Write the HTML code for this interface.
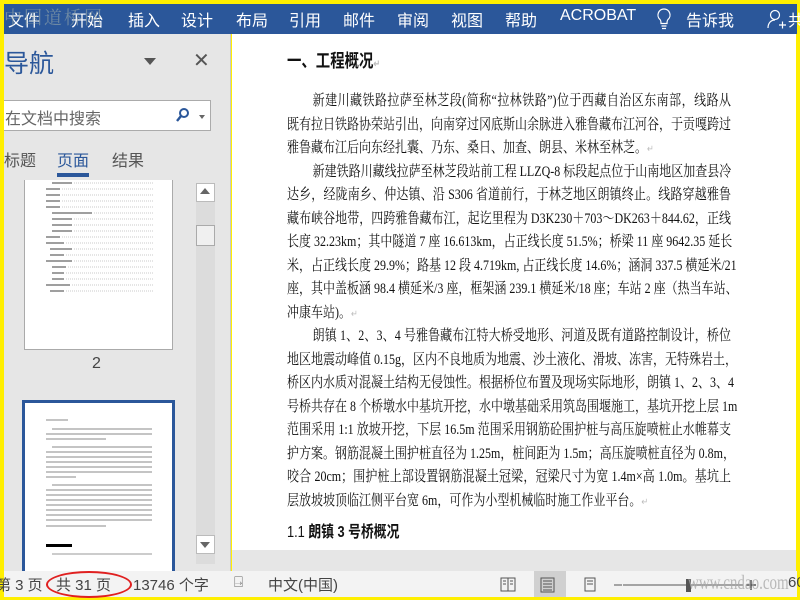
<!DOCTYPE html>
<html><head><meta charset="utf-8"><style>
*{margin:0;padding:0;box-sizing:border-box}
body{width:800px;height:600px;overflow:hidden;background:#ffef00;position:relative;font-family:"Liberation Sans","Noto Sans CJK SC",sans-serif}
.s{white-space:nowrap}
#rib{position:absolute;left:4px;top:4px;width:793px;height:30px;background:#2b579a;color:#fff;font-size:16px}
#rib span{position:absolute;top:3px}
#nav{position:absolute;left:4px;top:34px;width:227px;height:537px;background:#e6e6e6;border-right:1px solid #c8c8c8}
#doc{position:absolute;left:232px;top:34px;width:564px;height:516px;background:#fff}
#gray{position:absolute;left:232px;top:550px;width:564px;height:21px;background:#e6e6e6}
#stat{position:absolute;left:4px;top:571px;width:793px;height:26px;background:#f3f3f3;font-size:15px;color:#444}
#stat span{position:absolute;top:3px}
.l{position:absolute;left:287px;width:555px;transform:scaleX(.8);transform-origin:0 0;font-family:"Liberation Serif","Noto Serif CJK SC",serif;font-size:15px;line-height:18px;color:#111;text-align:justify;text-align-last:justify;white-space:nowrap}
.l.e{text-align-last:left}
.th{position:absolute;background:#fff;border:1px solid #aaa}
</style></head><body>
<div id="rib">
<span class="s" style="left:4px">文件</span><span class="s" style="left:67px">开始</span><span class="s" style="left:124px">插入</span><span class="s" style="left:177px">设计</span><span class="s" style="left:232px">布局</span><span class="s" style="left:285px">引用</span><span class="s" style="left:339px">邮件</span><span class="s" style="left:393px">审阅</span><span class="s" style="left:447px">视图</span><span class="s" style="left:501px">帮助</span><span class="s" style="left:556px">ACROBAT</span>
<svg style="position:absolute;left:652px;top:4px" width="16" height="22"><path d="M8 1a6 6 0 0 0-4 10.5c1 1 1 3 1 4h6c0-1 0-3 1-4A6 6 0 0 0 8 1zM5.5 18h5M6 20.5h4" stroke="#fff" fill="none" stroke-width="1.2"/></svg>
<span class="s" style="left:682px">告诉我</span>
<svg style="position:absolute;left:762px;top:4px" width="22" height="22"><circle cx="9" cy="7" r="4.5" stroke="#fff" fill="none" stroke-width="1.2"/><path d="M2 20c0-5 3-8 7-8M13 17h7M16.5 13.5v7" stroke="#fff" fill="none" stroke-width="1.2"/></svg>
<span class="s" style="left:784px">共</span>
</div>
<div class="s" style="position:absolute;left:4px;top:4px;font-size:18px;color:#9aa;opacity:.6;font-family:'Noto Serif CJK SC',serif;letter-spacing:2px">中国道桥网</div>
<div id="nav">
<div class="s" style="position:absolute;left:0;top:10px;font-size:25px;color:#2b579a">导航</div>
<div style="position:absolute;left:140px;top:24px;width:0;height:0;border:6px solid transparent;border-top:7px solid #555"></div>
<div style="position:absolute;left:189px;top:14px;font-size:20px;color:#555">✕</div>
<div style="position:absolute;left:0;top:66px;width:207px;height:31px;background:#fff;border:1px solid #ababab;border-left:none"></div>
<div class="s" style="position:absolute;left:1px;top:71px;font-size:16px;color:#666">在文档中搜索</div>
<svg style="position:absolute;left:172px;top:73px" width="14" height="16"><circle cx="8" cy="6" r="4" stroke="#2b579a" stroke-width="2" fill="none"/><path d="M5 9l-4 5" stroke="#2b579a" stroke-width="2.4"/></svg>
<div style="position:absolute;left:195px;top:81px;border:3px solid transparent;border-top:4px solid #666"></div>
<div class="s" style="position:absolute;left:0;top:113px;font-size:16px;color:#555">标题</div>
<div class="s" style="position:absolute;left:53px;top:113px;font-size:16px;color:#2b579a">页面</div>
<div class="s" style="position:absolute;left:108px;top:113px;font-size:16px;color:#555">结果</div>
<div style="position:absolute;left:53px;top:139px;width:32px;height:4px;background:#2b579a"></div>
<div class="th" style="left:20px;top:146px;width:149px;height:170px;border-top:none"></div>
<svg style="position:absolute;left:38px;top:142px" width="118" height="120">
<g stroke="#666" stroke-width="1.2">
<path d="M10 7h20M4 13h14M4 19h14M4 25h14M4 31h14M10 37h40M10 43h20M10 49h20M10 55h20M4 61h14M4 67h18M8 73h22M8 79h14M4 85h26M10 91h14M10 97h12M10 103h12M4 109h24M8 115h14"/>
</g>
<g stroke="#bbb" stroke-width=".8" stroke-dasharray="1 1"><path d="M32 7h80M20 13h92M20 19h92M20 25h92M20 31h92M52 37h60M32 43h80M32 49h80M32 55h80M20 61h92M24 67h88M32 73h80M24 79h88M32 85h80M26 91h86M24 97h88M24 103h88M30 109h82M24 115h88"/></g>
</svg>
<div style="position:absolute;left:88px;top:321px;font-size:16px;color:#444">2</div>
<div style="position:absolute;left:18px;top:366px;width:153px;height:180px;border:3px solid #2b579a;border-bottom:none;background:#fff"></div>
<svg style="position:absolute;left:38px;top:385px" width="118" height="160"><g stroke="#888" stroke-width="1.1"><path d="M4 1h22M10 10h100M4 15h106M4 20h60M10 28h100M4 33h106M4 38h106M4 43h106M4 48h106M4 53h106M4 58h30M10 66h100M4 71h106M4 76h106M4 81h106M4 86h106M4 91h106M4 96h106M4 101h106M4 107h60"/></g><rect x="4" y="125" width="26" height="3" fill="#000"/><path d="M10 135h100" stroke="#999"/></svg>
<div style="position:absolute;left:192px;top:150px;width:19px;height:380px;background:#dcdcdc"></div>
<div style="position:absolute;left:192px;top:149px;width:19px;height:19px;background:#fff;border:1px solid #bbb"></div>
<div style="position:absolute;left:196px;top:154px;border:5px solid transparent;border-bottom:6px solid #666;border-top:none"></div>
<div style="position:absolute;left:192px;top:191px;width:19px;height:21px;background:#f0f0f0;border:1px solid #aaa"></div>
<div style="position:absolute;left:192px;top:501px;width:19px;height:19px;background:#fff;border:1px solid #bbb"></div>
<div style="position:absolute;left:196px;top:508px;border:5px solid transparent;border-top:6px solid #666;border-bottom:none"></div>
</div>
<div id="doc"></div>
<div id="gray"></div>
<div class="l e" style="top:52px;font-family:'Liberation Sans','Noto Sans CJK SC',sans-serif;font-size:18px;font-weight:bold">一、工程概况<span style="color:#bbb;font-size:10px">↵</span></div>
<div class="l" style="top:92px;padding-left:32px">新建川藏铁路拉萨至林芝段(简称“拉林铁路”)位于西藏自治区东南部，线路从</div>
<div class="l" style="top:116px">既有拉日铁路协荣站引出，向南穿过冈底斯山余脉进入雅鲁藏布江河谷，于贡嘎跨过</div>
<div class="l e" style="top:139px">雅鲁藏布江后向东经扎囊、乃东、桑日、加查、朗县、米林至林芝。<span style="color:#bbb;font-size:10px">↵</span></div>
<div class="l" style="top:163px;padding-left:32px">新建铁路川藏线拉萨至林芝段站前工程 LLZQ-8 标段起点位于山南地区加查县冷</div>
<div class="l" style="top:186px">达乡，经陇南乡、仲达镇、沿 S306 省道前行，于林芝地区朗镇终止。线路穿越雅鲁</div>
<div class="l" style="top:210px">藏布峡谷地带，四跨雅鲁藏布江，起讫里程为 D3K230＋703～DK263＋844.62，正线</div>
<div class="l" style="top:233px">长度 32.23km；其中隧道 7 座 16.613km，占正线长度 51.5%；桥梁 11 座 9642.35 延长</div>
<div class="l" style="top:257px">米，占正线长度 29.9%；路基 12 段 4.719km, 占正线长度 14.6%；涵洞 337.5 横延米/21</div>
<div class="l" style="top:280px">座，其中盖板涵 98.4 横延米/3 座，框架涵 239.1 横延米/18 座；车站 2 座（热当车站、</div>
<div class="l e" style="top:304px">冲康车站)。<span style="color:#bbb;font-size:10px">↵</span></div>
<div class="l" style="top:327px;padding-left:32px">朗镇 1、2、3、4 号雅鲁藏布江特大桥受地形、河道及既有道路控制设计，桥位</div>
<div class="l" style="top:351px">地区地震动峰值 0.15g，区内不良地质为地震、沙土液化、滑坡、冻害，无特殊岩土，</div>
<div class="l" style="top:374px">桥区内水质对混凝土结构无侵蚀性。根据桥位布置及现场实际地形，朗镇 1、2、3、4</div>
<div class="l" style="top:398px">号桥共存在 8 个桥墩水中基坑开挖，水中墩基础采用筑岛围堰施工，基坑开挖上层 1m</div>
<div class="l" style="top:421px">范围采用 1:1 放坡开挖，下层 16.5m 范围采用钢筋砼围护桩与高压旋喷桩止水帷幕支</div>
<div class="l" style="top:445px">护方案。钢筋混凝土围护桩直径为 1.25m，桩间距为 1.5m；高压旋喷桩直径为 0.8m，</div>
<div class="l" style="top:468px">咬合 20cm；围护桩上部设置钢筋混凝土冠梁，冠梁尺寸为宽 1.4m×高 1.0m。基坑上</div>
<div class="l e" style="top:492px">层放坡坡顶临江侧平台宽 6m，可作为小型机械临时施工作业平台。<span style="color:#bbb;font-size:10px">↵</span></div>
<div class="l e" style="top:524px;font-family:'Liberation Sans','Noto Sans CJK SC',sans-serif;font-size:16px">1.1 <b>朗镇 3 号桥概况</b></div>
<div id="stat">
<span class="s" style="left:-8px">第 3 页</span><span class="s" style="left:52px">共 31 页</span><span class="s" style="left:129px">13746 个字</span>
<span style="left:230px;color:#666">⍈</span>
<span class="s" style="left:264px">中文(中国)</span>
<div style="position:absolute;left:42px;top:0px;width:86px;height:27px;border:2.5px solid #e02020;border-radius:50%"></div>
<div style="position:absolute;left:530px;top:0;width:32px;height:26px;background:#d0d0d0"></div>
<svg style="position:absolute;left:496px;top:6px" width="290" height="16"><g stroke="#555" fill="none"><rect x="1" y="1" width="14" height="13"/><path d="M8 1v13M3 4h3M3 7h3M10 4h3M10 7h3"/><rect x="41" y="1" width="13" height="14"/><path d="M43 4h9M43 7h9M43 10h9M43 13h9"/><rect x="85" y="1" width="10" height="13"/><path d="M87 4h6M87 7h6"/><path d="M114 8h8M123 8h120"/></g><rect x="186" y="2" width="5" height="13" fill="#555"/><path d="M246 8h10M251 3v10" stroke="#555" stroke-width="1.5"/></svg>
<span class="s" style="left:684px;top:1px;font-size:20px;color:#aaa;font-family:'Liberation Serif',serif;opacity:.8;transform:scaleX(.75);transform-origin:0 0">www.cndao.com</span>
<span style="left:784px">60</span>
</div>
</body></html>
